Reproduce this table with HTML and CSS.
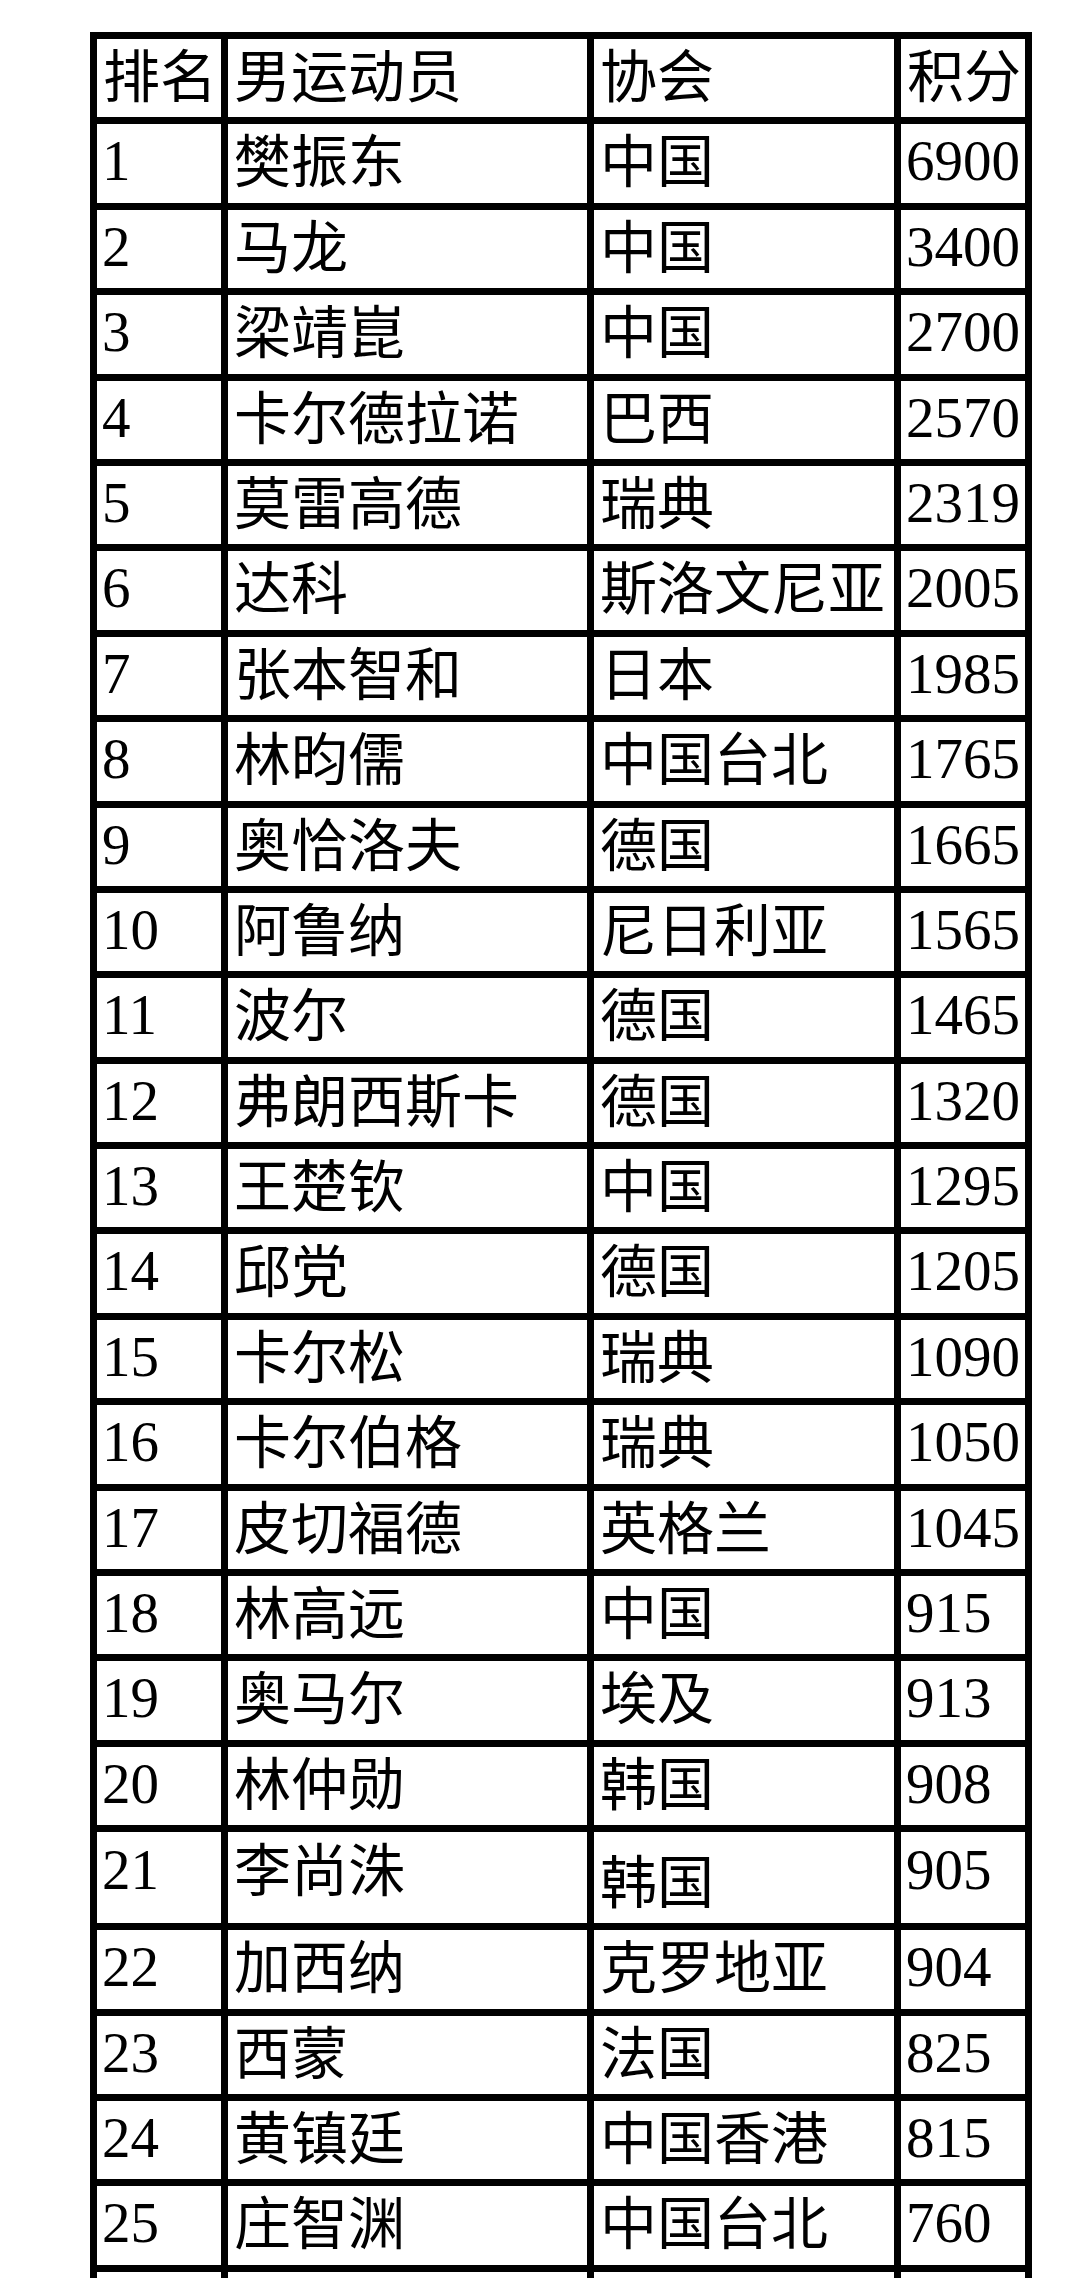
FILE: index.html
```html
<!DOCTYPE html>
<html lang="zh-CN">
<head>
<meta charset="utf-8">
<title>男子排名</title>
<link rel="stylesheet" href="styles.css">
</head>
<body>
<div class="sheet">
  <div class="grid">
    <div class="cell">排名</div><div class="cell">男运动员</div><div class="cell">协会</div><div class="cell">积分</div>
    <div class="cell num">1</div><div class="cell">樊振东</div><div class="cell">中国</div><div class="cell num">6900</div>
    <div class="cell num">2</div><div class="cell">马龙</div><div class="cell">中国</div><div class="cell num">3400</div>
    <div class="cell num">3</div><div class="cell">梁靖崑</div><div class="cell">中国</div><div class="cell num">2700</div>
    <div class="cell num">4</div><div class="cell">卡尔德拉诺</div><div class="cell">巴西</div><div class="cell num">2570</div>
    <div class="cell num">5</div><div class="cell">莫雷高德</div><div class="cell">瑞典</div><div class="cell num">2319</div>
    <div class="cell num">6</div><div class="cell">达科</div><div class="cell">斯洛文尼亚</div><div class="cell num">2005</div>
    <div class="cell num">7</div><div class="cell">张本智和</div><div class="cell">日本</div><div class="cell num">1985</div>
    <div class="cell num">8</div><div class="cell">林昀儒</div><div class="cell">中国台北</div><div class="cell num">1765</div>
    <div class="cell num">9</div><div class="cell">奥恰洛夫</div><div class="cell">德国</div><div class="cell num">1665</div>
    <div class="cell num">10</div><div class="cell">阿鲁纳</div><div class="cell">尼日利亚</div><div class="cell num">1565</div>
    <div class="cell num">11</div><div class="cell">波尔</div><div class="cell">德国</div><div class="cell num">1465</div>
    <div class="cell num">12</div><div class="cell">弗朗西斯卡</div><div class="cell">德国</div><div class="cell num">1320</div>
    <div class="cell num">13</div><div class="cell">王楚钦</div><div class="cell">中国</div><div class="cell num">1295</div>
    <div class="cell num">14</div><div class="cell">邱党</div><div class="cell">德国</div><div class="cell num">1205</div>
    <div class="cell num">15</div><div class="cell">卡尔松</div><div class="cell">瑞典</div><div class="cell num">1090</div>
    <div class="cell num">16</div><div class="cell">卡尔伯格</div><div class="cell">瑞典</div><div class="cell num">1050</div>
    <div class="cell num">17</div><div class="cell">皮切福德</div><div class="cell">英格兰</div><div class="cell num">1045</div>
    <div class="cell num">18</div><div class="cell">林高远</div><div class="cell">中国</div><div class="cell num">915</div>
    <div class="cell num">19</div><div class="cell">奥马尔</div><div class="cell">埃及</div><div class="cell num">913</div>
    <div class="cell num">20</div><div class="cell">林仲勋</div><div class="cell">韩国</div><div class="cell num">908</div>
    <div class="cell num tall up">21</div><div class="cell tall up">李尚洙</div><div class="cell tall down">韩国</div><div class="cell num tall up">905</div>
    <div class="cell num">22</div><div class="cell">加西纳</div><div class="cell">克罗地亚</div><div class="cell num">904</div>
    <div class="cell num">23</div><div class="cell">西蒙</div><div class="cell">法国</div><div class="cell num">825</div>
    <div class="cell num">24</div><div class="cell">黄镇廷</div><div class="cell">中国香港</div><div class="cell num">815</div>
    <div class="cell num">25</div><div class="cell">庄智渊</div><div class="cell">中国台北</div><div class="cell num">760</div>
    <div class="cell num"></div><div class="cell"></div><div class="cell"></div><div class="cell num"></div>
  </div>
</div>
</body>
</html>
```

FILE: styles.css
```css
html, body {
  margin: 0;
  padding: 0;
  background: #ffffff;
}

body {
  font-family: "Liberation Serif", "Noto Sans CJK SC", serif;
  color: #000000;
}

.sheet {
  padding: 32px 0 0 90px;
  height: 2278px;
  box-sizing: border-box;
  overflow: hidden;
}

.grid {
  display: inline-grid;
  grid-template-columns: 124px 359px 300px 124px;
  gap: 7px;
  padding: 7px;
  background: #000000;
}

.cell {
  background: #ffffff;
  height: 78.4px;
  box-sizing: border-box;
  display: flex;
  align-items: center;
  padding-left: 6px;
  padding-bottom: 12px;
  font-family: "Noto Sans CJK SC", sans-serif;
  font-size: 57px;
  line-height: 1.2;
  white-space: nowrap;
}

.cell.num {
  font-family: "Liberation Serif", serif;
  font-size: 57px;
  padding-left: 5px;
  padding-bottom: 4px;
}

.cell.tall {
  height: 91px;
}

.cell.up {
  padding-bottom: 23px;
}

.cell.num.up {
  padding-bottom: 15px;
}

.cell.down {
  padding-bottom: 0;
}
```
